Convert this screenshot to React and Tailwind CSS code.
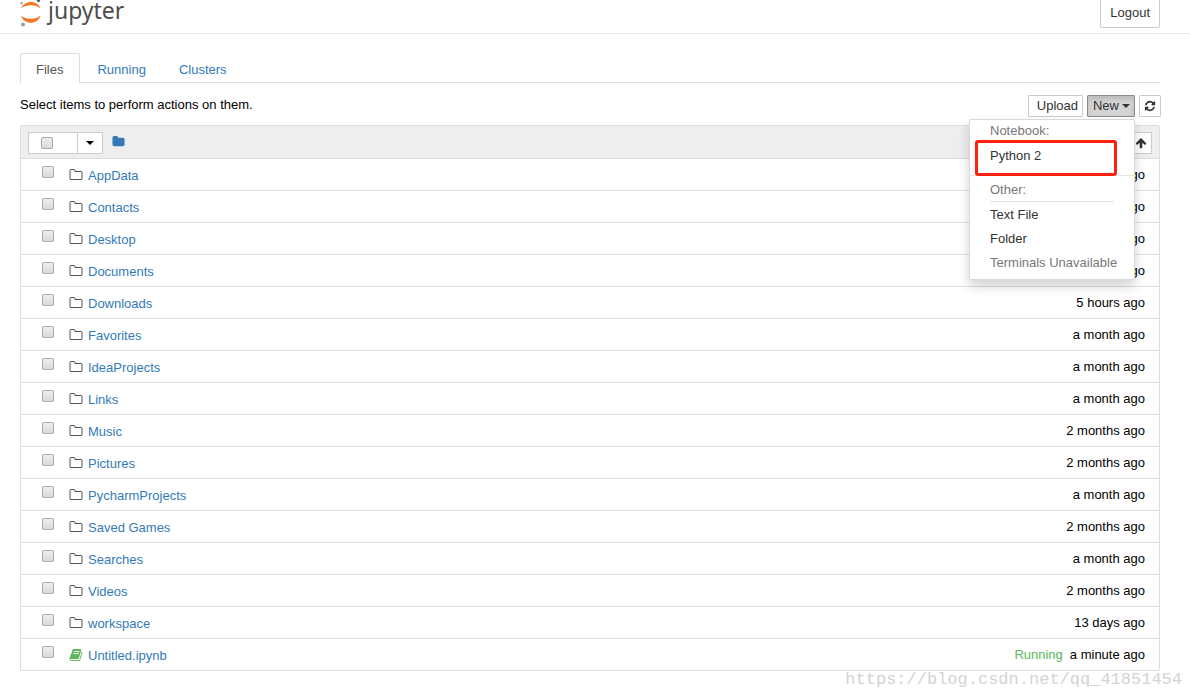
import { useState } from "react";

const files = [
  { name: "AppData", modified: "5 hours ago" },
  { name: "Contacts", modified: "a month ago" },
  { name: "Desktop", modified: "5 hours ago" },
  { name: "Documents", modified: "a month ago" },
  { name: "Downloads", modified: "5 hours ago" },
  { name: "Favorites", modified: "a month ago" },
  { name: "IdeaProjects", modified: "a month ago" },
  { name: "Links", modified: "a month ago" },
  { name: "Music", modified: "2 months ago" },
  { name: "Pictures", modified: "2 months ago" },
  { name: "PycharmProjects", modified: "a month ago" },
  { name: "Saved Games", modified: "2 months ago" },
  { name: "Searches", modified: "a month ago" },
  { name: "Videos", modified: "2 months ago" },
  { name: "workspace", modified: "13 days ago" },
  { name: "Untitled.ipynb", modified: "a minute ago", running: true },
];

const icons = {
  folder:
    "M1728 608v704q0 92-66 158t-158 66h-1216q-92 0-158-66t-66-158v-960q0-92 66-158t158-66h320q92 0 158 66t66 158v32h672q92 0 158 66t66 158z",
  folderOpen:
    "M1600 1312v-704q0-40-28-68t-68-28h-704q-40 0-68-28t-28-68v-64q0-40-28-68t-68-28h-320q-40 0-68 28t-28 68v960q0 40 28 68t68 28h1216q40 0 68-28t28-68zm128-704v704q0 92-66 158t-158 66h-1216q-92 0-158-66t-66-158v-960q0-92 66-158t158-66h320q92 0 158 66t66 158v32h672q92 0 158 66t66 158z",
  refresh:
    "M1639 1056q0 5-1 7-64 268-268 434.5t-478 166.5q-146 0-282.5-55t-243.5-157l-129 129q-19 19-45 19t-45-19-19-45v-448q0-26 19-45t45-19h448q26 0 45 19t19 45-19 45l-137 137q71 66 161 102t187 36q134 0 250-65t186-179q11-17 53-117 8-23 30-23h192q13 0 22.5 9.5t9.5 22.5zm25-800v448q0 26-19 45t-45 19h-448q-26 0-45-19t-19-45 19-45l138-138q-148-137-349-137-134 0-250 65t-186 179q-11 17-53 117-8 23-30 23h-199q-13 0-22.5-9.5t-9.5-22.5v-7q65-268 270-434.5t480-166.5q146 0 284 55.5t245 156.5l130-129q19-19 45-19t45 19 19 45z",
  arrowUp:
    "M1675 971q0 51-37 90l-75 75q-38 38-91 38-54 0-90-38l-294-293v704q0 52-37.5 84.5t-90.5 32.5h-128q-53 0-90.5-32.5t-37.5-84.5v-704l-294 293q-36 38-90 38t-90-38l-75-75q-38-38-38-90 0-53 38-91l651-651q35-37 90-37 54 0 91 37l651 651q37 39 37 91z",
  book:
    "M1703 478q40 57 18 129l-275 906q-19 64-76.5 107.5t-122.5 43.5h-923q-77 0-148.5-53.5t-99.5-131.5q-24-67-2-127 0-4 3-27t4-37q1-8-3-21.5t-3-19.5q2-11 8-21t16.5-23.5 16.5-23.5q23-38 45-91.5t30-91.5q3-10 .5-30t-.5-28q3-11 17-28t17-23q21-36 42-92t25-90q1-9-2.5-32t.5-28q4-13 22-30.5t22-22.5q19-26 42.5-84.5t27.5-96.5q1-8-3-25.5t-2-26.5q2-8 9-18t18-23 17-21q8-12 16.5-30.5t15-35 16-36 19.5-32 26.5-23.5 36-11.5 47.5 5.5l-1 3q38-9 51-9h761q74 0 114 56t18 130l-274 906q-36 119-71.5 153.5t-128.5 34.5h-869q-27 0-38 15-11 16-1 43 24 70 144 70h923q29 0 56-15.5t35-41.5l300-987q7-22 5-57 38 15 59 43zm-1064 2q-4 13 2 22.5t20 9.5h608q13 0 25.5-9.5t16.5-22.5l21-64q4-13-2-22.5t-20-9.5h-608q-13 0-25.5 9.5t-16.5 22.5zm-83 256q-4 13 2 22.5t20 9.5h608q13 0 25.5-9.5t16.5-22.5l21-64q4-13-2-22.5t-20-9.5h-608q-13 0-25.5 9.5t-16.5 22.5z",
};

function Icon({ name, className }) {
  return (
    <svg viewBox="0 0 1792 1792" fill="currentColor" className={className} aria-hidden="true">
      <path d={icons[name]} />
    </svg>
  );
}

function Caret() {
  return (
    <svg viewBox="0 0 8 4" className="h-1 w-2" fill="currentColor" aria-hidden="true">
      <path d="M0 0h8L4 4z" />
    </svg>
  );
}

function Checkbox({ label }) {
  return (
    <input
      type="checkbox"
      aria-label={label}
      className="block size-3 shrink-0 appearance-none rounded-[2px] border border-[#a9a9a9] bg-linear-to-b from-[#ededed] to-[#dcdcdc] checked:bg-[#337ab7] checked:bg-none"
    />
  );
}

function Logo() {
  return (
    <a href="#tree" className="flex items-start gap-[7px] text-[#4e4e4e]">
      <svg viewBox="0 0 21 28" className="h-7 w-[21px]" aria-hidden="true">
        <path d="M1 8.500C4-.2 18-.2 20.500 8.500 16 4.200 5.500 4.200 1 8.500z" fill="#f37726" />
        <path d="M1 15.500C4 25.200 18 25.200 20.500 15.500 16 19.800 5.500 19.800 1 15.500z" fill="#f37726" />
        <circle cx="1.500" cy="3" r="1" fill="#767677" />
        <circle cx="18.500" cy="0.500" r="1.700" fill="#616262" />
        <circle cx="3" cy="24.500" r="2" fill="#9e9e9e" />
      </svg>
      <span className="-mt-1 font-['Noto_Sans',sans-serif] text-[23px] leading-7">jupyter</span>
    </a>
  );
}

function NewMenu() {
  return (
    <div className="absolute top-6 right-0 z-10 w-[166px] rounded-[2px] border border-black/15 bg-white pt-1 pb-1 text-[#333] shadow-[0_6px_12px_rgba(0,0,0,0.18)]">
      <div className="px-5 leading-[14px] text-[#777]">Notebook:</div>
      <div className="mb-[7px] border-b border-[#e5e5e5] pt-[6px] pb-[7px]">
        <a href="#python2" className="block px-5 py-[3px] leading-[18px]">Python 2</a>
      </div>
      <div className="mx-5 mb-px border-b border-[#e5e5e5] pb-1 leading-[14px] text-[#777]">Other:</div>
      <a href="#text" className="block px-5 py-[3px] leading-[18px]">Text File</a>
      <a href="#folder" className="block px-5 py-[3px] leading-[18px]">Folder</a>
      <div className="px-5 py-[3px] leading-[18px] whitespace-nowrap text-[#777]">Terminals Unavailable</div>
      {/* highlight frame around the kernel entry */}
      <div className="pointer-events-none absolute top-5 left-[5px] h-9 w-[142px] rounded-[3px] border-3 border-[#ff2010]" />
    </div>
  );
}

export default function App() {
  const [menuOpen, setMenuOpen] = useState(true);

  return (
    <div className="relative min-h-screen overflow-hidden bg-white font-['Liberation_Sans',Arial,sans-serif] text-[13px] leading-5 text-black">
      <header className="flex h-[34px] items-start justify-between border-b border-[#e7e7e7] pr-[30px] pl-5">
        <Logo />
        <button type="button" className="-mt-0.5 h-[30px] rounded-[2px] border border-[#ccc] bg-white px-[9px] text-[#333]">
          Logout
        </button>
      </header>

      <main className="pt-[19px] pr-[30px] pl-5">
        <nav className="flex h-[30px] border-b border-[#ddd] text-[#337ab7]">
          <a href="#files" className="h-[30px] rounded-t-[2px] border border-b-0 border-[#ddd] bg-white pr-4 pl-[15px] pt-[6px] text-[#555]">
            Files
          </a>
          <a href="#running" className="px-[17px] pt-[7px]">Running</a>
          <a href="#clusters" className="px-4 pt-[7px]">Clusters</a>
        </nav>

        <div className="flex items-start justify-between pt-3 pb-2">
          <p>Select items to perform actions on them.</p>
          <div className="-mr-px flex gap-1 text-[#333]">
            <button type="button" className="h-[22px] rounded-[1px] border border-[#ccc] bg-white pr-1 pl-2">
              Upload
            </button>
            <div className="relative">
              <button
                type="button"
                aria-expanded={menuOpen}
                onClick={() => setMenuOpen(!menuOpen)}
                className="flex h-[22px] items-center gap-[3px] rounded-[1px] border border-[#8c8c8c] bg-[#d4d4d4] pr-1 pl-[5px] shadow-[inset_0_3px_5px_rgba(0,0,0,0.125)]"
              >
                New
                <Caret />
              </button>
              {menuOpen && <NewMenu />}
            </div>
            <button type="button" aria-label="Refresh" className="h-[22px] rounded-[1px] border border-[#ccc] bg-white px-1">
              <Icon name="refresh" className="size-3" />
            </button>
          </div>
        </div>

        <section className="rounded-[2px] border border-[#ddd]">
          <div className="flex h-8 items-center justify-between bg-[#eee] px-[7px] pt-px">
            <div className="flex items-center">
              <div className="flex h-[22px] border border-[#ccc] bg-white">
                <div className="flex w-[49px] items-center border-r border-[#ccc] pl-3">
                  <Checkbox label="Select all" />
                </div>
                <button type="button" aria-label="Select options" className="flex w-6 items-center justify-center">
                  <Caret />
                </button>
              </div>
              <a href="#home" aria-label="Home" className="ml-[9px] pb-[3px] text-[#337ab7]">
                <Icon name="folder" className="size-[13px]" />
              </a>
            </div>
            <button type="button" aria-label="Sort" className="h-[22px] border border-[#ccc] bg-white px-1 text-[#333]">
              <Icon name="arrowUp" className="size-3" />
            </button>
          </div>

          <ul>
            {files.map((file) => (
              <li key={file.name} className="flex h-8 items-center border-t border-[#ddd] pr-[14px] pl-[21px]">
                <div className="pb-[6px]">
                  <Checkbox label={file.name} />
                </div>
                <Icon
                  name={file.running ? "book" : "folderOpen"}
                  className={file.running ? "ml-[15px] size-[14px] text-[#5cb85c]" : "ml-[15px] size-[14px] text-[#555]"}
                />
                <a href="#open" className="ml-[5px] pt-0.5 text-[#337ab7]">{file.name}</a>
                {file.running && <span className="ml-auto text-[#5cb85c]">Running</span>}
                <span className={file.running ? "ml-[7px]" : "ml-auto"}>{file.modified}</span>
              </li>
            ))}
          </ul>
        </section>
      </main>

      <div className="pointer-events-none absolute top-[668px] right-2 font-['Liberation_Mono',monospace] text-[17px] leading-6 text-[#d4d4d0]">
        https://blog.csdn.net/qq_41851454
      </div>
    </div>
  );
}
